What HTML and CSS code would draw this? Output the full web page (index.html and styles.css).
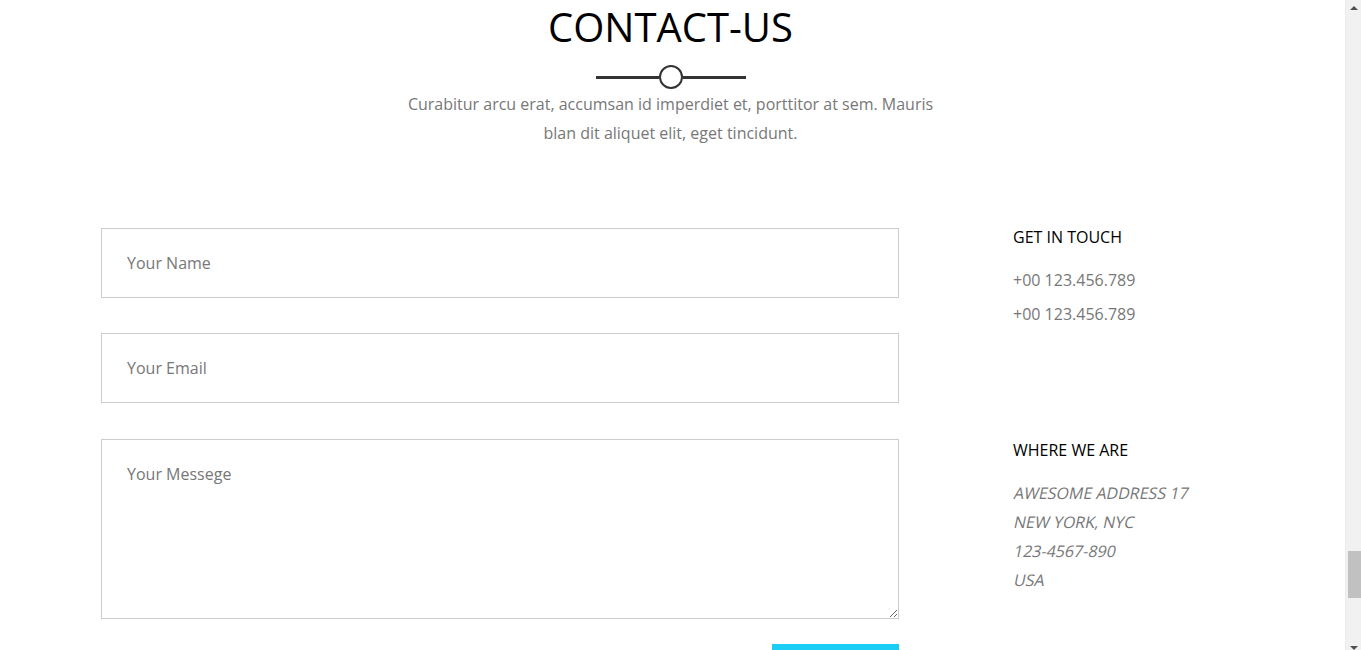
FILE: index.html
```html
<!DOCTYPE html>
<html lang="en">
<head>
<meta charset="utf-8">
<title>Contact Us</title>
<link rel="stylesheet" href="styles.css">
</head>
<body>
<section class="contact">
  <header class="contact-head">
    <h2 class="contact-title">CONTACT-US</h2>
    <div class="divider"><span class="divider-line"></span><span class="divider-dot"></span><span class="divider-line"></span></div>
    <p class="contact-lead">Curabitur arcu erat, accumsan id imperdiet et, porttitor at sem. Mauris blan dit aliquet elit, eget tincidunt.</p>
  </header>
  <div class="contact-body">
    <form class="contact-form">
      <input class="field" type="text" placeholder="Your Name">
      <input class="field" type="email" placeholder="Your Email">
      <textarea class="field field-area" placeholder="Your Messege"></textarea>
      <div class="form-actions"><button class="send-btn" type="button">SEND</button></div>
    </form>
    <aside class="contact-info">
      <div class="info-block">
        <h4 class="info-title">GET IN TOUCH</h4>
        <p class="info-phone">+00 123.456.789</p>
        <p class="info-phone">+00 123.456.789</p>
      </div>
      <div class="info-block info-where">
        <h4 class="info-title">WHERE WE ARE</h4>
        <address class="info-address">
          <span class="addr-line">AWESOME ADDRESS 17</span>
          <span class="addr-line">NEW YORK, NYC</span>
          <span class="addr-line">123-4567-890</span>
          <span class="addr-line">USA</span>
        </address>
      </div>
    </aside>
  </div>
</section>
<div class="scrollbar" aria-hidden="true">
  <span class="sb-arrow sb-up"></span>
  <span class="sb-thumb"></span>
  <span class="sb-arrow sb-down"></span>
</div>
</body>
</html>
```
FILE: styles.css
```css
html, body {
  margin: 0;
  padding: 0;
  background: #fff;
}
body {
  font-family: "Open Sans", "Liberation Sans", sans-serif;
  color: #777;
  padding-right: 15px;
}
.contact {
  padding-bottom: 80px;
}
.contact-head {
  display: flex;
  flex-direction: column;
  align-items: center;
  padding-right: 5px;
}
.contact-title {
  margin: 0;
  font-size: 40px;
  font-weight: 400;
  line-height: 54px;
  color: #000;
}
.divider {
  display: flex;
  align-items: center;
  margin-top: 11px;
  height: 24px;
}
.divider-line {
  width: 63px;
  height: 3px;
  background: #333;
}
.divider-dot {
  width: 20px;
  height: 20px;
  border: 2px solid #333;
  border-radius: 50%;
  background: #fff;
}
.contact-lead {
  margin: 1px 0 0;
  width: 540px;
  text-align: center;
  font-size: 16px;
  line-height: 29px;
  color: #777;
}
.contact-body {
  display: flex;
  align-items: flex-start;
  margin-top: 80px;
  padding-left: 101px;
}
.contact-form {
  width: 798px;
  display: flex;
  flex-direction: column;
}
.field {
  box-sizing: border-box;
  width: 100%;
  height: 70px;
  margin: 0;
  padding: 0 25px;
  border: 1px solid #ccc;
  border-radius: 0;
  background: #fff;
  font-family: "Open Sans", "Liberation Sans", sans-serif;
  font-size: 16px;
  color: #555;
  outline: none;
}
.field + .field {
  margin-top: 35px;
}
.field::placeholder {
  color: #777;
  opacity: 1;
}
.field-area {
  height: 180px;
  padding-top: 22px;
  line-height: 24px;
  resize: vertical;
  display: block;
}
.field + .field-area {
  margin-top: 36px;
}
.form-actions {
  display: flex;
  justify-content: flex-end;
  margin-top: 25px;
}
.send-btn {
  width: 127px;
  height: 46px;
  border: 0;
  background: #1ccdf6;
  color: #fff;
  font-family: "Open Sans", "Liberation Sans", sans-serif;
  font-size: 14px;
  letter-spacing: 1px;
  padding-top: 22px;
}
.contact-info {
  margin-left: 114px;
  width: 220px;
}
.info-title {
  margin: 0;
  font-size: 16px;
  font-weight: 400;
  line-height: 20px;
  color: #000;
}
.info-block:first-child .info-title {
  margin-top: -1px;
}
.info-phone {
  margin: 0;
  font-size: 16px;
  line-height: 24px;
  color: #777;
}
.info-title + .info-phone {
  margin-top: 21px;
}
.info-phone + .info-phone {
  margin-top: 10px;
}
.info-where {
  margin-top: 114px;
}
.info-address {
  display: flex;
  flex-direction: column;
  align-items: flex-start;
  margin-top: 19px;
  font-size: 16px;
  line-height: 29px;
  font-style: normal;
  color: #777;
}
.addr-line {
  display: block;
  transform: skewX(-12deg);
  transform-origin: 0 70%;
}
.scrollbar {
  position: fixed;
  top: 0;
  right: 0;
  width: 15px;
  height: 100vh;
  background: #f1f1f1;
  border-left: 1px solid #ececec;
}
.sb-thumb {
  position: absolute;
  left: 2px;
  top: 551px;
  width: 13px;
  height: 47px;
  background: #c1c1c1;
}
.sb-arrow {
  position: absolute;
  left: 4px;
  width: 0;
  height: 0;
  border-left: 4px solid transparent;
  border-right: 4px solid transparent;
}
.sb-up {
  top: 6px;
  border-bottom: 4px solid #505050;
}
.sb-down {
  bottom: 0;
  border-top: 4px solid #505050;
}
```
